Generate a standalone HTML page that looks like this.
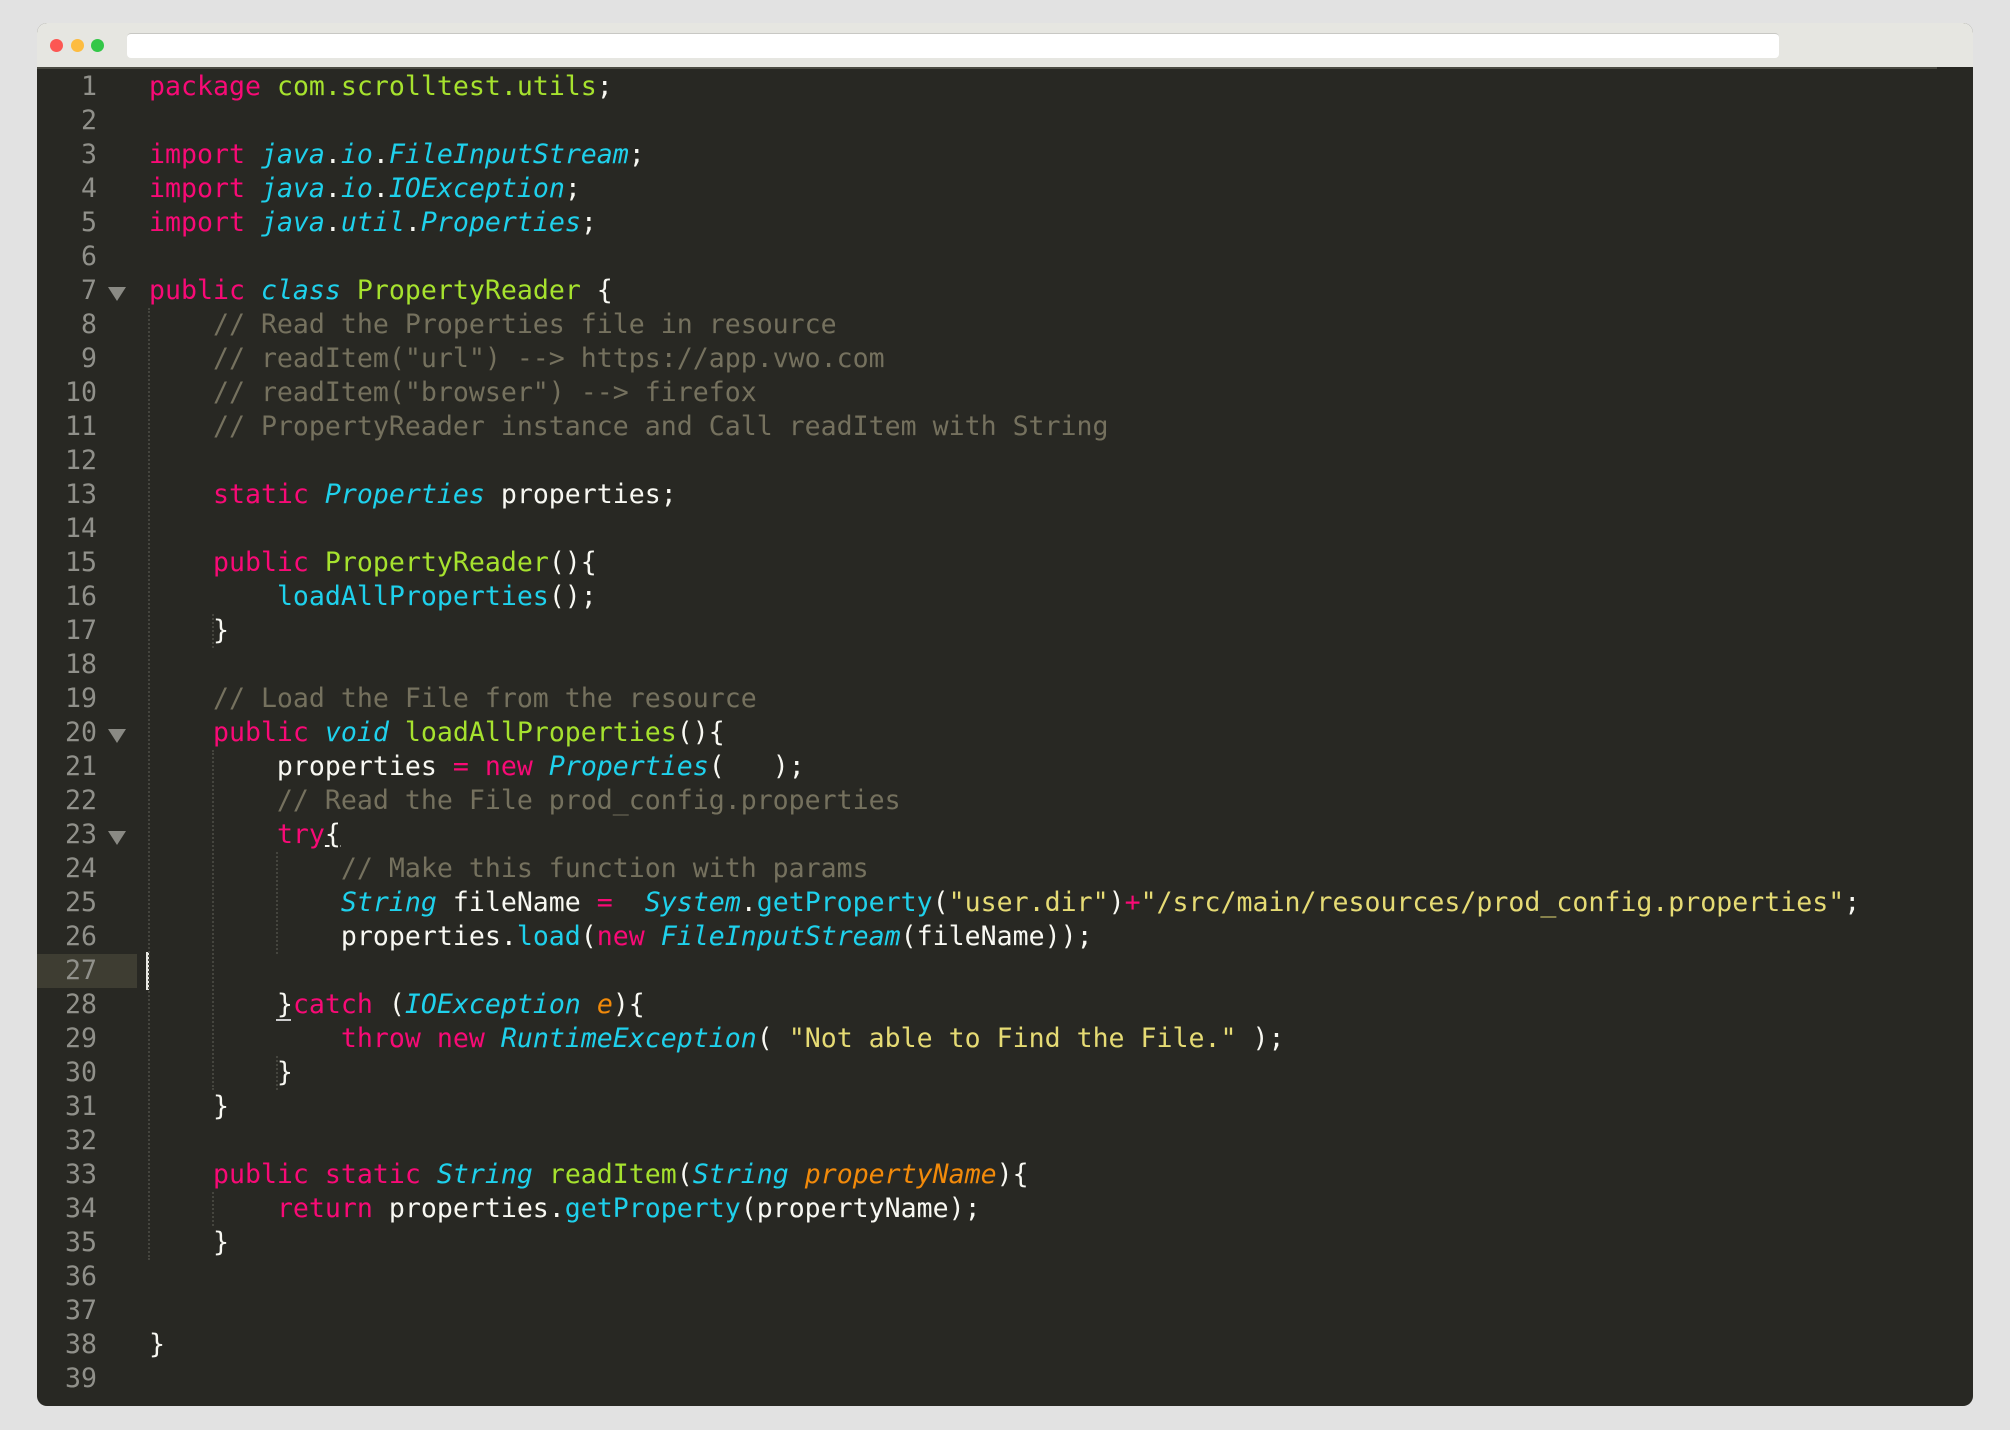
<!DOCTYPE html>
<html><head><meta charset="utf-8"><style>
html,body{margin:0;padding:0;background:#e2e2e2;width:2010px;height:1430px;overflow:hidden}
.win{position:absolute;left:37px;top:23px;width:1936px;height:1383px;background:#282823;border-radius:10px;overflow:hidden}
.tb{position:absolute;left:0;top:0;width:100%;height:44px;background:#e6e6e1}
.dot{position:absolute;top:16px;width:13px;height:13px;border-radius:50%}
.addr{position:absolute;left:90px;top:10px;width:1652px;height:24px;background:#fff;border-radius:4px;border-top:1px solid #c8c8c4}
.code{position:absolute;left:0;top:47px;width:100%;font-family:"DejaVu Sans Mono","Liberation Mono",monospace;font-size:26.57px;line-height:34px;white-space:pre;color:#f8f8f2}
.ln{position:absolute;left:0;width:60px;text-align:right;color:#90908a}
.l{position:absolute;left:112px}
.k{color:#f80a76}.g{color:#a6e22e}.c{color:#1fd1ec}.i{color:#1fd1ec;font-style:italic}.m{color:#75715e}.s{color:#e6db74}.o{color:#f28a0a;font-style:italic}
.guide{position:absolute;width:0;border-left:2px dotted #45453e}
.tri{position:absolute;left:71px;width:0;height:0;border-left:9px solid transparent;border-right:9px solid transparent;border-top:14px solid #8a8a84}
</style></head><body>
<div class="win">
<div class="tb"></div>
<div class="dot" style="left:13px;background:#fc5753"></div>
<div class="dot" style="left:34px;background:#fdbc40"></div>
<div class="dot" style="left:54px;background:#33c748"></div>
<div class="addr"></div>
<div style="position:absolute;left:0;top:44px;width:1900px;height:2px;background:#4a4a42"></div>
<div style="position:absolute;left:0;top:931px;width:100px;height:34px;background:#3e3d32"></div>
<div style="position:absolute;left:109px;top:929px;width:3px;height:38px;background:#e8e8e2"></div>
<div class="guide" style="left:111px;top:285px;height:952px"></div>
<div class="guide" style="left:175px;top:591px;height:34px"></div>
<div class="guide" style="left:175px;top:727px;height:340px"></div>
<div class="guide" style="left:175px;top:1169px;height:34px"></div>
<div class="guide" style="left:239px;top:829px;height:102px"></div>
<div class="guide" style="left:239px;top:1033px;height:34px"></div>
<div style="position:absolute;left:239px;top:996px;width:15px;height:2px;background:#ccc"></div>
<div class="tri" style="top:264px"></div>
<div class="tri" style="top:706px"></div>
<div class="tri" style="top:808px"></div>
<div class="code">
<div class="ln" style="top:0">1</div><div class="l" style="top:0"><span class="k">package</span> <span class="g">com.scrolltest.utils</span>;</div>
<div class="ln" style="top:34px">2</div>
<div class="ln" style="top:68px">3</div><div class="l" style="top:68px"><span class="k">import</span> <span class="i">java</span>.<span class="i">io</span>.<span class="i">FileInputStream</span>;</div>
<div class="ln" style="top:102px">4</div><div class="l" style="top:102px"><span class="k">import</span> <span class="i">java</span>.<span class="i">io</span>.<span class="i">IOException</span>;</div>
<div class="ln" style="top:136px">5</div><div class="l" style="top:136px"><span class="k">import</span> <span class="i">java</span>.<span class="i">util</span>.<span class="i">Properties</span>;</div>
<div class="ln" style="top:170px">6</div>
<div class="ln" style="top:204px">7</div><div class="l" style="top:204px"><span class="k">public</span> <span class="i">class</span> <span class="g">PropertyReader</span> {</div>
<div class="ln" style="top:238px">8</div><div class="l m" style="top:238px">    // Read the Properties file in resource</div>
<div class="ln" style="top:272px">9</div><div class="l m" style="top:272px">    // readItem("url") --&gt; https://app.vwo.com</div>
<div class="ln" style="top:306px">10</div><div class="l m" style="top:306px">    // readItem("browser") --&gt; firefox</div>
<div class="ln" style="top:340px">11</div><div class="l m" style="top:340px">    // PropertyReader instance and Call readItem with String</div>
<div class="ln" style="top:374px">12</div>
<div class="ln" style="top:408px">13</div><div class="l" style="top:408px">    <span class="k">static</span> <span class="i">Properties</span> properties;</div>
<div class="ln" style="top:442px">14</div>
<div class="ln" style="top:476px">15</div><div class="l" style="top:476px">    <span class="k">public</span> <span class="g">PropertyReader</span>(){</div>
<div class="ln" style="top:510px">16</div><div class="l" style="top:510px">        <span class="c">loadAllProperties</span>();</div>
<div class="ln" style="top:544px">17</div><div class="l" style="top:544px">    }</div>
<div class="ln" style="top:578px">18</div>
<div class="ln" style="top:612px">19</div><div class="l m" style="top:612px">    // Load the File from the resource</div>
<div class="ln" style="top:646px">20</div><div class="l" style="top:646px">    <span class="k">public</span> <span class="i">void</span> <span class="g">loadAllProperties</span>(){</div>
<div class="ln" style="top:680px">21</div><div class="l" style="top:680px">        properties <span class="k">=</span> <span class="k">new</span> <span class="i">Properties</span>(   );</div>
<div class="ln" style="top:714px">22</div><div class="l m" style="top:714px">        // Read the File prod_config.properties</div>
<div class="ln" style="top:748px">23</div><div class="l" style="top:748px">        <span class="k">try</span><u>{</u></div>
<div class="ln" style="top:782px">24</div><div class="l m" style="top:782px">            // Make this function with params</div>
<div class="ln" style="top:816px">25</div><div class="l" style="top:816px">            <span class="i">String</span> fileName <span class="k">=</span>  <span class="i">System</span>.<span class="c">getProperty</span>(<span class="s">"user.dir"</span>)<span class="k">+</span><span class="s">"/src/main/resources/prod_config.properties"</span>;</div>
<div class="ln" style="top:850px">26</div><div class="l" style="top:850px">            properties.<span class="c">load</span>(<span class="k">new</span> <span class="i">FileInputStream</span>(fileName));</div>
<div class="ln" style="top:884px">27</div>
<div class="ln" style="top:918px">28</div><div class="l" style="top:918px">        }<span class="k">catch</span> (<span class="i">IOException</span> <span class="o">e</span>){</div>
<div class="ln" style="top:952px">29</div><div class="l" style="top:952px">            <span class="k">throw</span> <span class="k">new</span> <span class="i">RuntimeException</span>( <span class="s">"Not able to Find the File."</span> );</div>
<div class="ln" style="top:986px">30</div><div class="l" style="top:986px">        }</div>
<div class="ln" style="top:1020px">31</div><div class="l" style="top:1020px">    }</div>
<div class="ln" style="top:1054px">32</div>
<div class="ln" style="top:1088px">33</div><div class="l" style="top:1088px">    <span class="k">public</span> <span class="k">static</span> <span class="i">String</span> <span class="g">readItem</span>(<span class="i">String</span> <span class="o">propertyName</span>){</div>
<div class="ln" style="top:1122px">34</div><div class="l" style="top:1122px">        <span class="k">return</span> properties.<span class="c">getProperty</span>(propertyName);</div>
<div class="ln" style="top:1156px">35</div><div class="l" style="top:1156px">    }</div>
<div class="ln" style="top:1190px">36</div>
<div class="ln" style="top:1224px">37</div>
<div class="ln" style="top:1258px">38</div><div class="l" style="top:1258px">}</div>
<div class="ln" style="top:1292px">39</div>
</div>
</div>
</body></html>
